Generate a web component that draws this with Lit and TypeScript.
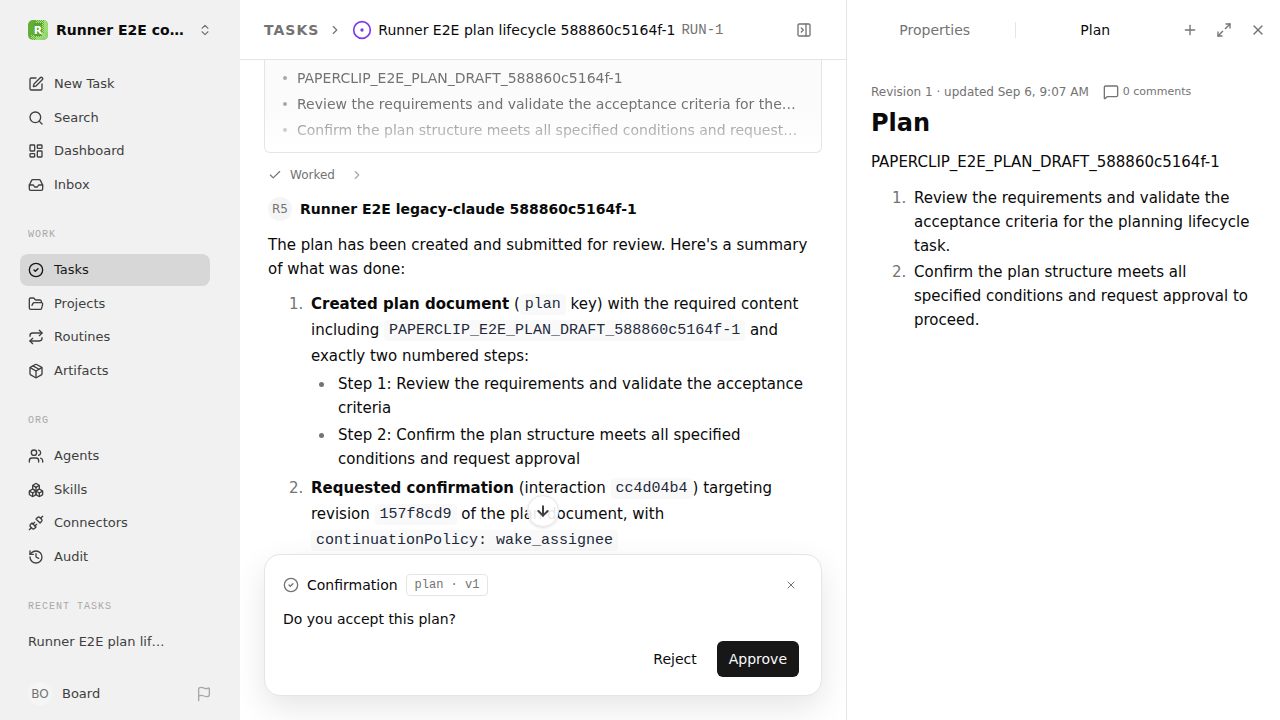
import { LitElement, html, css, svg, TemplateResult, SVGTemplateResult } from "lit";
import { customElement } from "lit/decorators.js";

const p = (d: string): SVGTemplateResult => svg`<path d=${d}></path>`;

const ICONS: Record<string, SVGTemplateResult> = {
  chevronsUpDown: svg`${p("m7 15 5 5 5-5")}${p("m7 9 5-5 5 5")}`,
  squarePen: svg`${p("M12 3H5a2 2 0 0 0-2 2v14a2 2 0 0 0 2 2h14a2 2 0 0 0 2-2v-7")}${p("M18.375 2.625a1 1 0 0 1 3 3l-9.013 9.014a2 2 0 0 1-.853.505l-2.873.84a.5.5 0 0 1-.62-.62l.84-2.873a2 2 0 0 1 .506-.852z")}`,
  search: svg`<circle cx="11" cy="11" r="8"></circle>${p("m21 21-4.34-4.34")}`,
  dashboard: svg`<rect width="7" height="9" x="3" y="3" rx="1"></rect><rect width="7" height="5" x="14" y="3" rx="1"></rect><rect width="7" height="9" x="14" y="12" rx="1"></rect><rect width="7" height="5" x="3" y="16" rx="1"></rect>`,
  inbox: svg`${p("M22 12h-6l-2 3h-4l-2-3H2")}${p("M5.45 5.11 2 12v6a2 2 0 0 0 2 2h16a2 2 0 0 0 2-2v-6l-3.45-6.89A2 2 0 0 0 16.76 4H7.24a2 2 0 0 0-1.79 1.11z")}`,
  circleCheck: svg`<circle cx="12" cy="12" r="10"></circle>${p("m9 12 2 2 4-4")}`,
  folderOpen: svg`${p("m6 14 1.5-2.9A2 2 0 0 1 9.24 10H20a2 2 0 0 1 1.94 2.5l-1.54 6a2 2 0 0 1-1.95 1.5H4a2 2 0 0 1-2-2V5a2 2 0 0 1 2-2h3.9a2 2 0 0 1 1.69.9l.81 1.2a2 2 0 0 0 1.67.9H18a2 2 0 0 1 2 2v2")}`,
  repeat: svg`${p("m17 2 4 4-4 4")}${p("M3 11v-1a4 4 0 0 1 4-4h14")}${p("m7 22-4-4 4-4")}${p("M21 13v1a4 4 0 0 1-4 4H3")}`,
  package: svg`${p("M11 21.73a2 2 0 0 0 2 0l7-4A2 2 0 0 0 21 16V8a2 2 0 0 0-1-1.73l-7-4a2 2 0 0 0-2 0l-7 4A2 2 0 0 0 3 8v8a2 2 0 0 0 1 1.73z")}${p("M12 22V12")}${p("M3.29 7 12 12l8.71-5")}${p("m7.5 4.27 9 5.15")}`,
  users: svg`${p("M16 21v-2a4 4 0 0 0-4-4H6a4 4 0 0 0-4 4v2")}<circle cx="9" cy="7" r="4"></circle>${p("M22 21v-2a4 4 0 0 0-3-3.87")}${p("M16 3.13a4 4 0 0 1 0 7.75")}`,
  boxes: svg`${p("M2.97 12.92A2 2 0 0 0 2 14.63v3.24a2 2 0 0 0 .97 1.71l3 1.8a2 2 0 0 0 2.06 0L12 19v-5.5l-5-3-4.03 2.42Z")}${p("m7 16.5-4.74-2.85")}${p("m7 16.5 5-3")}${p("M7 16.5v5.17")}${p("M12 13.5V19l3.97 2.38a2 2 0 0 0 2.06 0l3-1.8a2 2 0 0 0 .97-1.71v-3.24a2 2 0 0 0-.97-1.71L17 10.5l-5 3Z")}${p("m17 16.5-5-3")}${p("m17 16.5 4.74-2.85")}${p("M17 16.5v5.17")}${p("M7.97 4.42A2 2 0 0 0 7 6.13v4.37l5 3 5-3V6.13a2 2 0 0 0-.97-1.71l-3-1.8a2 2 0 0 0-2.06 0l-3 1.8Z")}${p("M12 8 7.26 5.15")}${p("m12 8 4.74-2.85")}${p("M12 13.5V8")}`,
  unplug: svg`${p("m19 5 3-3")}${p("m2 22 3-3")}${p("M6.3 20.3a2.4 2.4 0 0 0 3.4 0L12 18l-6-6-2.3 2.3a2.4 2.4 0 0 0 0 3.4Z")}${p("M7.5 13.5 10 11")}${p("M10.5 16.5 13 14")}${p("m12 6 6 6 2.3-2.3a2.4 2.4 0 0 0 0-3.4l-2.6-2.6a2.4 2.4 0 0 0-3.4 0Z")}`,
  history: svg`${p("M3 12a9 9 0 1 0 9-9 9.75 9.75 0 0 0-6.74 2.74L3 8")}${p("M3 3v5h5")}${p("M12 7v5l4 2")}`,
  flag: svg`${p("M4 22V4a1 1 0 0 1 .4-.8A6 6 0 0 1 8 2c3 0 5 2 7.333 2q2 0 3.067-.8A1 1 0 0 1 20 4v10a1 1 0 0 1-.4.8A6 6 0 0 1 16 16c-3 0-5-2-8-2a6 6 0 0 0-4 1.528")}`,
  chevronRight: p("m9 18 6-6-6-6"),
  check: p("M20 6 9 17l-5-5"),
  panelClose: svg`<rect width="18" height="18" x="3" y="3" rx="2"></rect>${p("M15 3v18")}${p("m8 9 3 3-3 3")}`,
  plus: svg`${p("M5 12h14")}${p("M12 5v14")}`,
  expand: svg`${p("M15 3h6v6")}${p("m21 3-7 7")}${p("m3 21 7-7")}${p("M9 21H3v-6")}`,
  x: svg`${p("M18 6 6 18")}${p("m6 6 12 12")}`,
  message: p("M22 17a2 2 0 0 1-2 2H6.828a2 2 0 0 0-1.414.586l-2.202 2.202A.71.71 0 0 1 2 21.286V5a2 2 0 0 1 2-2h16a2 2 0 0 1 2 2z"),
  arrowDown: svg`${p("M12 5v14")}${p("m19 12-7 7-7-7")}`,
};

const icon = (name: string, size = 16): TemplateResult => html`
  <svg class="icon" width=${size} height=${size} viewBox="0 0 24 24" aria-hidden="true">${ICONS[name]}</svg>
`;

const GROUPS = [
  { title: "", items: [["squarePen", "New Task"], ["search", "Search"], ["dashboard", "Dashboard"], ["inbox", "Inbox"]] },
  { title: "Work", items: [["circleCheck", "Tasks"], ["folderOpen", "Projects"], ["repeat", "Routines"], ["package", "Artifacts"]] },
  { title: "Org", items: [["users", "Agents"], ["boxes", "Skills"], ["unplug", "Connectors"], ["history", "Audit"]] },
];

const shared = css`
  * { box-sizing: border-box; }
  .icon {
    display: block;
    flex: none;
    fill: none;
    stroke: currentColor;
    stroke-width: 2;
    stroke-linecap: round;
    stroke-linejoin: round;
  }
  button {
    font: inherit;
    color: inherit;
    background: none;
    border: 0;
    padding: 0;
    cursor: pointer;
  }
  a { color: inherit; text-decoration: none; }
  h1, h2, p, ul, ol { margin: 0; padding: 0; }
`;

@customElement("app-sidebar")
export class AppSidebar extends LitElement {
  static styles = [shared, css`
    :host {
      display: flex;
      flex-direction: column;
      background: #f1f1f1;
      color: #3f3f3f;
      font-size: 13px;
      line-height: 20px;
    }
    .workspace {
      display: flex;
      align-items: center;
      gap: 8px;
      height: 60px;
      padding: 0 28px;
      color: #0a0a0a;
      font-size: 14px;
      font-weight: 700;
      text-align: left;
    }
    .workspace .icon { color: #737373; }
    .name { flex: 1; min-width: 0; }
    .name, .recent {
      overflow: hidden;
      white-space: nowrap;
      text-overflow: ellipsis;
    }
    .logo { flex: none; display: block; border-radius: 5px; }
    nav { padding: 8px 30px 0 20px; }
    .group {
      display: grid;
      align-content: space-between;
      height: 133px;
      list-style: none;
    }
    .item {
      display: flex;
      align-items: center;
      gap: 10px;
      height: 32px;
      padding: 0 8px;
      border-radius: 8px;
    }
    .item.active { background: #d7d7d7; color: #171717; }
    .title {
      margin: 26px 8px 11px;
      color: #a8a8a8;
      font: 400 10px/16px "Liberation Mono", monospace;
      letter-spacing: 1px;
      text-transform: uppercase;
    }
    .recent { display: block; width: 153px; padding: 6px 8px; }
    .account {
      display: flex;
      align-items: center;
      gap: 10px;
      margin-top: auto;
      padding: 0 28px 14px;
    }
    .avatar {
      display: grid;
      place-items: center;
      width: 24px;
      height: 24px;
      border-radius: 50%;
      background: #f5f5f5;
      color: #737373;
      font-size: 12px;
    }
    .flag { margin-left: auto; color: #a8a8a8; }
  `];

  render() {
    return html`
      <button class="workspace">
        <svg class="logo" width="20" height="20" viewBox="0 0 20 20" aria-hidden="true">
          <defs>
            <pattern id="light" width="2" height="2" patternUnits="userSpaceOnUse">
              <rect width="1" height="1" fill="#a5e283"></rect>
              <rect x="1" y="1" width="1" height="1" fill="#a5e283"></rect>
            </pattern>
            <pattern id="dark" width="2" height="2" patternUnits="userSpaceOnUse">
              <rect width="1" height="1" fill="#4e9a24"></rect>
              <rect x="1" y="1" width="1" height="1" fill="#4e9a24"></rect>
            </pattern>
          </defs>
          <rect width="20" height="20" fill="#62ad35"></rect>
          <path d="M16 0H20V20H8V17H13V13H16Z" fill="#93d66e"></path>
          <path d="M8 0H20V12H17V17H13V20H3V15H6V4H8Z" fill="url(#light)"></path>
          <path d="M6 3H14V16H6Z" fill="url(#dark)"></path>
          <text x="10" y="14" text-anchor="middle" font-family="DejaVu Sans, sans-serif" font-size="11" font-weight="700" fill="#fff">R</text>
        </svg>
        <span class="name">Runner E2E company</span>
        ${icon("chevronsUpDown", 14)}
      </button>
      <nav aria-label="Main">
        ${GROUPS.map((g) => html`
          ${g.title ? html`<h2 class="title">${g.title}</h2>` : ""}
          <ul class="group">
            ${g.items.map(([i, label]) => html`
              <li><a href="#" class="item ${label === "Tasks" ? "active" : ""}">${icon(i)}<span>${label}</span></a></li>
            `)}
          </ul>
        `)}
        <h2 class="title">Recent tasks</h2>
        <a href="#" class="recent">Runner E2E plan lifecycle 588860c5164f-1</a>
      </nav>
      <div class="account">
        <span class="avatar">BO</span>
        <span>Board</span>
        <button class="flag" aria-label="Feedback">${icon("flag")}</button>
      </div>
    `;
  }
}

@customElement("task-thread")
export class TaskThread extends LitElement {
  static styles = [shared, css`
    :host {
      display: flex;
      flex-direction: column;
      min-width: 0;
      min-height: 0;
      overflow: hidden;
    }
    .bar {
      display: flex;
      flex: none;
      align-items: center;
      height: 60px;
      padding: 0 34px 0 24px;
      border-bottom: 1px solid #e5e5e5;
      font-size: 14px;
      line-height: 20px;
      white-space: nowrap;
    }
    .crumb { color: #737373; font-weight: 700; letter-spacing: 1px; }
    .sep { margin: 0 10px 0 9px; color: #737373; }
    .status { margin-right: 6px; color: #7c3aed; }
    .bar h1 { font-size: 14px; font-weight: 400; }
    .key { margin-left: 6px; color: #737373; font-family: "Liberation Mono", monospace; }
    .panel { margin-left: auto; color: #737373; }
    .scroll { flex: 1; min-height: 0; padding: 0 24px; overflow: hidden; }
    .preview {
      height: 93px;
      padding: 5px 22px 0 32px;
      border: 1px solid #e5e5e5;
      border-top: 0;
      border-radius: 0 0 6px 6px;
      background: linear-gradient(#fbfbfb 55%, #fff);
      color: #737373;
      font-size: 14px;
      line-height: 26px;
    }
    .fade {
      margin-left: -20px;
      list-style: none;
      -webkit-mask-image: linear-gradient(#000 44px, transparent 92px);
      mask-image: linear-gradient(#000 44px, transparent 92px);
    }
    .fade li {
      position: relative;
      padding-left: 20px;
      overflow: hidden;
      white-space: nowrap;
      text-overflow: ellipsis;
    }
    .fade li::before {
      content: "";
      position: absolute;
      left: 6px;
      top: 11px;
      width: 4px;
      height: 4px;
      border-radius: 50%;
      background: #a8a8a8;
    }
    .worked {
      display: flex;
      align-items: center;
      gap: 8px;
      margin-top: 12px;
      padding: 0 4px;
      color: #737373;
      font-size: 12px;
      line-height: 20px;
    }
    .worked .icon:last-child { margin-left: 7px; color: #a8a8a8; }
    .author {
      display: flex;
      align-items: center;
      gap: 8px;
      margin-top: 12px;
      padding: 0 4px;
      font-size: 14px;
      font-weight: 700;
    }
    .avatar {
      display: grid;
      place-items: center;
      width: 24px;
      height: 24px;
      border-radius: 50%;
      background: #f5f5f5;
      color: #737373;
      font-size: 12px;
      font-weight: 400;
    }
    .body { padding: 12px 4px 0; font-size: 15px; line-height: 24px; }
    .body ol { margin-top: 10px; padding-left: 40px; line-height: 26px; }
    .body li { padding-left: 3px; }
    .body ol > li + li { margin-top: 4px; }
    .body ul { margin-top: 3px; padding-left: 24px; list-style: disc; line-height: 24px; }
    .body ul > li + li { margin-top: 3px; }
    .body li::marker { color: #737373; }
    code {
      padding: 2px 5px;
      border-radius: 4px;
      background: #f9f9f9;
      color: #1e293b;
      font-family: "Liberation Mono", monospace;
      font-size: 15px;
      line-height: 16px;
      vertical-align: 1px;
    }
    .composer {
      position: relative;
      flex: none;
      margin: 0 24px 24px;
      padding: 19px 18px 18px;
      border: 1px solid #e5e5e5;
      border-radius: 16px;
      background: #fff;
      box-shadow: 0 12px 32px rgba(0, 0, 0, 0.1);
      font-size: 14px;
      line-height: 20px;
    }
    .jump {
      position: absolute;
      left: 50%;
      bottom: 100%;
      display: grid;
      place-items: center;
      width: 32px;
      height: 32px;
      margin: 0 0 28px -16px;
      border: 1px solid #e5e5e5;
      border-radius: 50%;
      background: rgba(255, 255, 255, 0.9);
      box-shadow: 0 1px 3px rgba(0, 0, 0, 0.12);
      color: #3f3f3f;
    }
    .jump .icon { stroke-width: 3; }
    .head { display: flex; align-items: center; gap: 8px; height: 22px; }
    .head > .icon { color: #737373; }
    .tag {
      padding: 0 8px;
      border: 1px solid #e5e5e5;
      border-radius: 4px;
      color: #737373;
      font: 12px/20px "Liberation Mono", monospace;
    }
    .close { margin: 0 6px 0 auto; color: #737373; }
    .question { margin-top: 13px; }
    .actions { display: flex; justify-content: flex-end; gap: 8px; margin-top: 12px; padding-right: 4px; }
    .btn { height: 36px; padding: 0 12px; border-radius: 6px; }
    .primary { background: #171717; color: #fafafa; }
  `];

  render() {
    return html`
      <header class="bar">
        <a href="#" class="crumb">TASKS</a>
        <span class="sep">${icon("chevronRight", 14)}</span>
        <svg class="icon status" width="20" height="20" viewBox="0 0 24 24" aria-hidden="true">
          <circle cx="12" cy="12" r="10"></circle><circle cx="12" cy="12" r="1"></circle>
        </svg>
        <h1>Runner E2E plan lifecycle 588860c5164f-1</h1>
        <span class="key">RUN-1</span>
        <button class="panel" aria-label="Close panel">${icon("panelClose")}</button>
      </header>
      <div class="scroll">
        <div class="preview">
          <ul class="fade">
            <li>PAPERCLIP_E2E_PLAN_DRAFT_588860c5164f-1</li>
            <li>Review the requirements and validate the acceptance criteria for the planning lifecycle task.</li>
            <li>Confirm the plan structure meets all specified conditions and request approval to proceed.</li>
          </ul>
        </div>
        <div class="worked">${icon("check", 14)}<span>Worked</span>${icon("chevronRight", 14)}</div>
        <div class="author"><span class="avatar">R5</span><span>Runner E2E legacy-claude 588860c5164f-1</span></div>
        <div class="body">
          <p>The plan has been created and submitted for review. Here's a summary of what was done:</p>
          <ol>
            <li><b>Created plan document</b> (<code>plan</code> key) with the required content including <code>PAPERCLIP_E2E_PLAN_DRAFT_588860c5164f-1</code> and exactly two numbered steps:
              <ul>
                <li>Step 1: Review the requirements and validate the acceptance criteria</li>
                <li>Step 2: Confirm the plan structure meets all specified conditions and request approval</li>
              </ul>
            </li>
            <li><b>Requested confirmation</b> (interaction <code>cc4d04b4</code>) targeting revision <code>157f8cd9</code> of the plan document, with <code>continuationPolicy: wake_assignee</code></li>
          </ol>
        </div>
      </div>
      <section class="composer" aria-label="Confirmation">
        <button class="jump" aria-label="Scroll to latest">${icon("arrowDown")}</button>
        <div class="head">
          ${icon("circleCheck")}<span>Confirmation</span><span class="tag">plan · v1</span>
          <button class="close" aria-label="Dismiss">${icon("x", 12)}</button>
        </div>
        <p class="question">Do you accept this plan?</p>
        <div class="actions">
          <button class="btn">Reject</button>
          <button class="btn primary">Approve</button>
        </div>
      </section>
    `;
  }
}

@customElement("plan-panel")
export class PlanPanel extends LitElement {
  static styles = [shared, css`
    :host { display: block; border-left: 1px solid #e5e5e5; }
    .tabs {
      display: flex;
      align-items: center;
      height: 60px;
      padding: 0 14px 0 8px;
      color: #737373;
      font-size: 14px;
      line-height: 20px;
    }
    .tab { flex: 1 1 0; height: 32px; }
    .tab.on { color: #0a0a0a; }
    .divider { width: 1px; height: 16px; background: #e5e5e5; }
    .tools { display: flex; gap: 18px; margin-left: 7px; }
    .doc { padding: 22px 24px; font-size: 15px; line-height: 24px; }
    .meta {
      display: flex;
      align-items: center;
      gap: 14px;
      color: #737373;
      font-size: 12px;
      line-height: 20px;
    }
    .comments { display: flex; align-items: center; gap: 4px; font-size: 11px; }
    h1 { margin-top: 5px; font-size: 24px; line-height: 32px; font-weight: 700; }
    .lead { margin-top: 11px; }
    ol { margin-top: 12px; padding-left: 40px; }
    li { padding-left: 3px; }
    li + li { margin-top: 2px; }
    li::marker { color: #737373; }
  `];

  render() {
    return html`
      <div class="tabs" role="tablist">
        <button class="tab" role="tab" aria-selected="false">Properties</button>
        <span class="divider"></span>
        <button class="tab on" role="tab" aria-selected="true">Plan</button>
        <div class="tools">
          <button aria-label="Add tab">${icon("plus")}</button>
          <button aria-label="Expand">${icon("expand")}</button>
          <button aria-label="Close">${icon("x")}</button>
        </div>
      </div>
      <article class="doc">
        <div class="meta">
          <span>Revision 1 · updated Sep 6, 9:07 AM</span>
          <button class="comments">${icon("message")}<span>0 comments</span></button>
        </div>
        <h1>Plan</h1>
        <p class="lead">PAPERCLIP_E2E_PLAN_DRAFT_588860c5164f-1</p>
        <ol>
          <li>Review the requirements and validate the acceptance criteria for the planning lifecycle task.</li>
          <li>Confirm the plan structure meets all specified conditions and request approval to proceed.</li>
        </ol>
      </article>
    `;
  }
}

@customElement("app-root")
export class AppRoot extends LitElement {
  static styles = css`
    :host {
      display: grid;
      grid-template-columns: 240px minmax(0, 1fr) 434px;
      grid-template-rows: 100vh;
      background: #fff;
      color: #0a0a0a;
      font-family: "DejaVu Sans", sans-serif;
    }
  `;

  render() {
    return html`
      <app-sidebar></app-sidebar>
      <task-thread></task-thread>
      <plan-panel></plan-panel>
    `;
  }
}
